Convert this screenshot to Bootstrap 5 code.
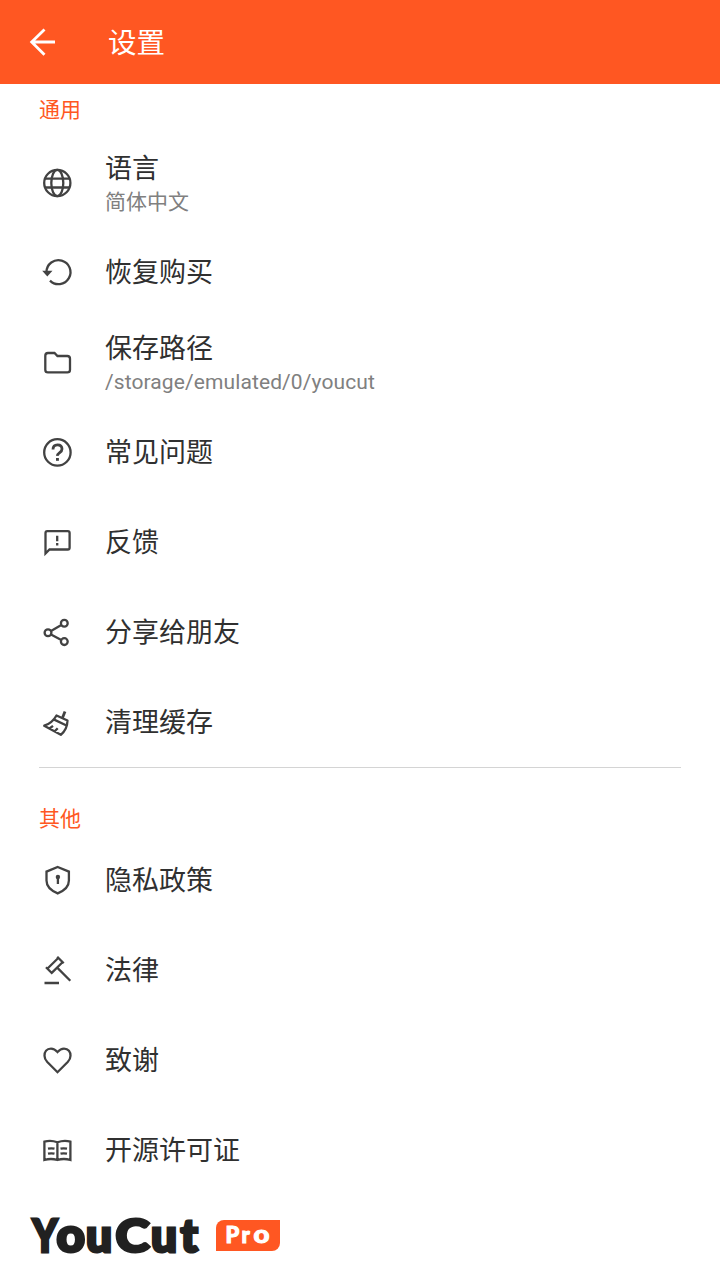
<!DOCTYPE html>
<html lang="zh-CN">
<head>
<meta charset="utf-8">
<meta name="viewport" content="width=device-width, initial-scale=1">
<title>设置</title>
<link href="https://cdn.jsdelivr.net/npm/bootstrap@5.3.0/dist/css/bootstrap.min.css" rel="stylesheet">
<style>
:root{--brand:#ff5722}
body{font-family:Roboto,"Noto Sans CJK SC",sans-serif;background:#fff;color:#303030;height:1280px;overflow:hidden}
.topbar{height:84px;background:var(--brand);padding-left:24px}
.topbar h1{font-size:28.5px;line-height:40px;font-weight:400;margin-left:48px;padding-top:3px}
.section-title{color:var(--brand);font-size:21px;line-height:30px;padding-left:39px;font-weight:400}
.first-title{height:53px;padding-top:11px}
.other-title{height:67px;padding-top:36px}
.setting{height:90px;padding-left:39px}
.setting svg{width:36px;height:36px;margin-right:30px;fill:none;stroke:#424242;stroke-width:2.3}
.setting-name{font-size:27px;line-height:36px;padding-top:2px}
.setting-pair{padding-top:3px}
.setting-note{font-size:21px;line-height:31px;color:#808080}
.storage-path{letter-spacing:.1px}
.divider{height:1px;background:#d4d4d4;margin:0 39px}
.brand-row{height:85px;padding:16px 0 0 30px}
.wordmark{font-family:Lato,sans-serif;font-weight:900;font-size:46px;fill:#212121;stroke:#212121;stroke-width:3}
.brand-row svg{overflow:visible}
.wordmark .round{font-size:48px}
.pro{width:64px;height:31px;margin:9px 0 0 12px;background:var(--brand);border-radius:8px 0 8px 0}
.pro text{font-family:Lato,sans-serif;font-weight:900;font-size:22px;fill:#fff;stroke:#fff;stroke-width:1}
.pro .round{font-size:24px}
</style>
</head>
<body>
<header class="topbar d-flex align-items-center text-white">
  <svg width="36" height="36" fill="none" stroke="#fff" stroke-width="2.8"><path d="M20.5 5.5 7.7 18l12.8 12.7M7.5 18H31"/></svg>
  <h1 class="mb-0">设置</h1>
</header>
<main>
  <h2 class="section-title first-title mb-0">通用</h2>
  <div class="setting d-flex align-items-center">
    <svg><circle cx="18.3" cy="19" r="13.1"/><ellipse cx="18.3" cy="19" rx="6" ry="13.1"/><path d="M6.5 14.6h23.6M6.5 23.5h23.6"/></svg>
    <div class="setting-pair"><div class="setting-name">语言</div><div class="setting-note">简体中文</div></div>
  </div>
  <div class="setting d-flex align-items-center">
    <svg><path d="M7.5 18A12 12 0 1 1 11 26.6"/><path d="M3.2 16.700h10.300L8.300 22.400z" fill="#424242" stroke="none"/></svg>
    <div class="setting-name">恢复购买</div>
  </div>
  <div class="setting d-flex align-items-center">
    <svg><path d="M9 9h6.500l3 3H28.300q2.700 0 2.700 2.700v11q0 2.700-2.700 2.700H9q-2.700 0-2.700-2.700V11.700Q6.300 9 9 9z"/></svg>
    <div class="setting-pair"><div class="setting-name">保存路径</div><div class="setting-note storage-path">/storage/emulated/0/youcut</div></div>
  </div>
  <div class="setting d-flex align-items-center">
    <svg><circle cx="18.400" cy="18.400" r="13.200"/><path d="M14 15.500q0-4.700 4.500-4.700t4.500 4.200q0 2-2.300 3.700t-2.200 3.100" style="stroke-width:2.800"/><path d="M17 24h2.900v2.800H17z" fill="#424242" stroke="none"/></svg>
    <div class="setting-name">常见问题</div>
  </div>
  <div class="setting d-flex align-items-center">
    <svg><path d="M6.500 29.500V9q0-1.800 1.800-1.800h20.500q1.800 0 1.800 1.800v14.700q0 1.800-1.800 1.800H10.500z"/><path d="M18.200 11.700v5.500M18.200 19v2.500"/></svg>
    <div class="setting-name">反馈</div>
  </div>
  <div class="setting d-flex align-items-center">
    <svg><circle cx="25.300" cy="9.200" r="3.400"/><circle cx="9" cy="18.700" r="3.400"/><circle cx="25.300" cy="27.600" r="3.400"/><path d="M12 17l10.300-6M12 20.400l10.300 5.600"/></svg>
    <div class="setting-name">分享给朋友</div>
  </div>
  <div class="setting d-flex align-items-center">
    <svg stroke-linejoin="round"><path d="M26 7.500l-2.500 6.200" stroke-width="2.800"/><path d="M17.500 11.500l11 5q-.2 9-6.700 14.300L5.200 21.700q8-2.500 12.300-10.200zM15.200 15.600l11.800 5.600M10.500 24.500l3.500-2.700M15.500 27.500l3.200-3.300"/></svg>
    <div class="setting-name">清理缓存</div>
  </div>
  <div class="divider"></div>
  <h2 class="section-title other-title mb-0">其他</h2>
  <div class="setting d-flex align-items-center">
    <svg><path d="M18.700 5L29.900 9.600v9q0 8.400-11.200 12.800-11.200-4.400-11.200-12.800v-9z"/><circle cx="18.900" cy="15" r="2.200" fill="#424242" stroke="none"/><path d="M18.900 15v7"/></svg>
    <div class="setting-name">隐私政策</div>
  </div>
  <div class="setting d-flex align-items-center">
    <svg><path d="M7 15.200l6.500 6.500M18.200 4.700l6.500 6.500M8.800 16.200L19 6.200M13 20.600L23.500 10.300M18.200 15.600L31.300 28.700M5.500 31H20"/></svg>
    <div class="setting-name">法律</div>
  </div>
  <div class="setting d-flex align-items-center">
    <svg><path d="M18.500 10Q15.500 6.600 12 6.600C7.500 6.600 5.500 10.200 5.500 13.700Q5.500 17 8.300 20L18.500 30.200 28.700 20Q31.500 17 31.500 13.700C31.500 10.200 29.500 6.600 25 6.600Q21.500 6.600 18.500 10z"/></svg>
    <div class="setting-name">致谢</div>
  </div>
  <div class="setting d-flex align-items-center">
    <svg><path d="M18.400 10.300Q12 7.700 5.400 9.600V28q6.500-2 13 0 6.500-2 13 0V9.600q-6.500-1.900-13 .7zM18.400 10v19M9 16.700q3.500-.7 6.500 0M9 21.700q3.500-.7 6.500 0M21.500 16.700q3-.7 6.500 0M21.500 21.700q3-.7 6.500 0"/></svg>
    <div class="setting-name">开源许可证</div>
  </div>
</main>
<footer class="brand-row d-flex align-items-start">
  <svg width="174" height="50"><text class="wordmark" y="41"><tspan x="2.500" textLength="25" lengthAdjust="spacingAndGlyphs">Y</tspan><tspan class="round" x="26.500" textLength="28.500" lengthAdjust="spacingAndGlyphs">o</tspan><tspan x="56">u</tspan><tspan x="85.500" textLength="34" lengthAdjust="spacingAndGlyphs">C</tspan><tspan x="121">u</tspan><tspan x="150.500">t</tspan></text></svg>
  <svg class="pro"><text y="23"><tspan x="9.500">P</tspan><tspan x="25.500">r</tspan><tspan class="round" x="37.500" textLength="16" lengthAdjust="spacingAndGlyphs">o</tspan></text></svg>
</footer>
<script src="https://cdn.jsdelivr.net/npm/bootstrap@5.3.0/dist/js/bootstrap.bundle.min.js"></script>
</body>
</html>
